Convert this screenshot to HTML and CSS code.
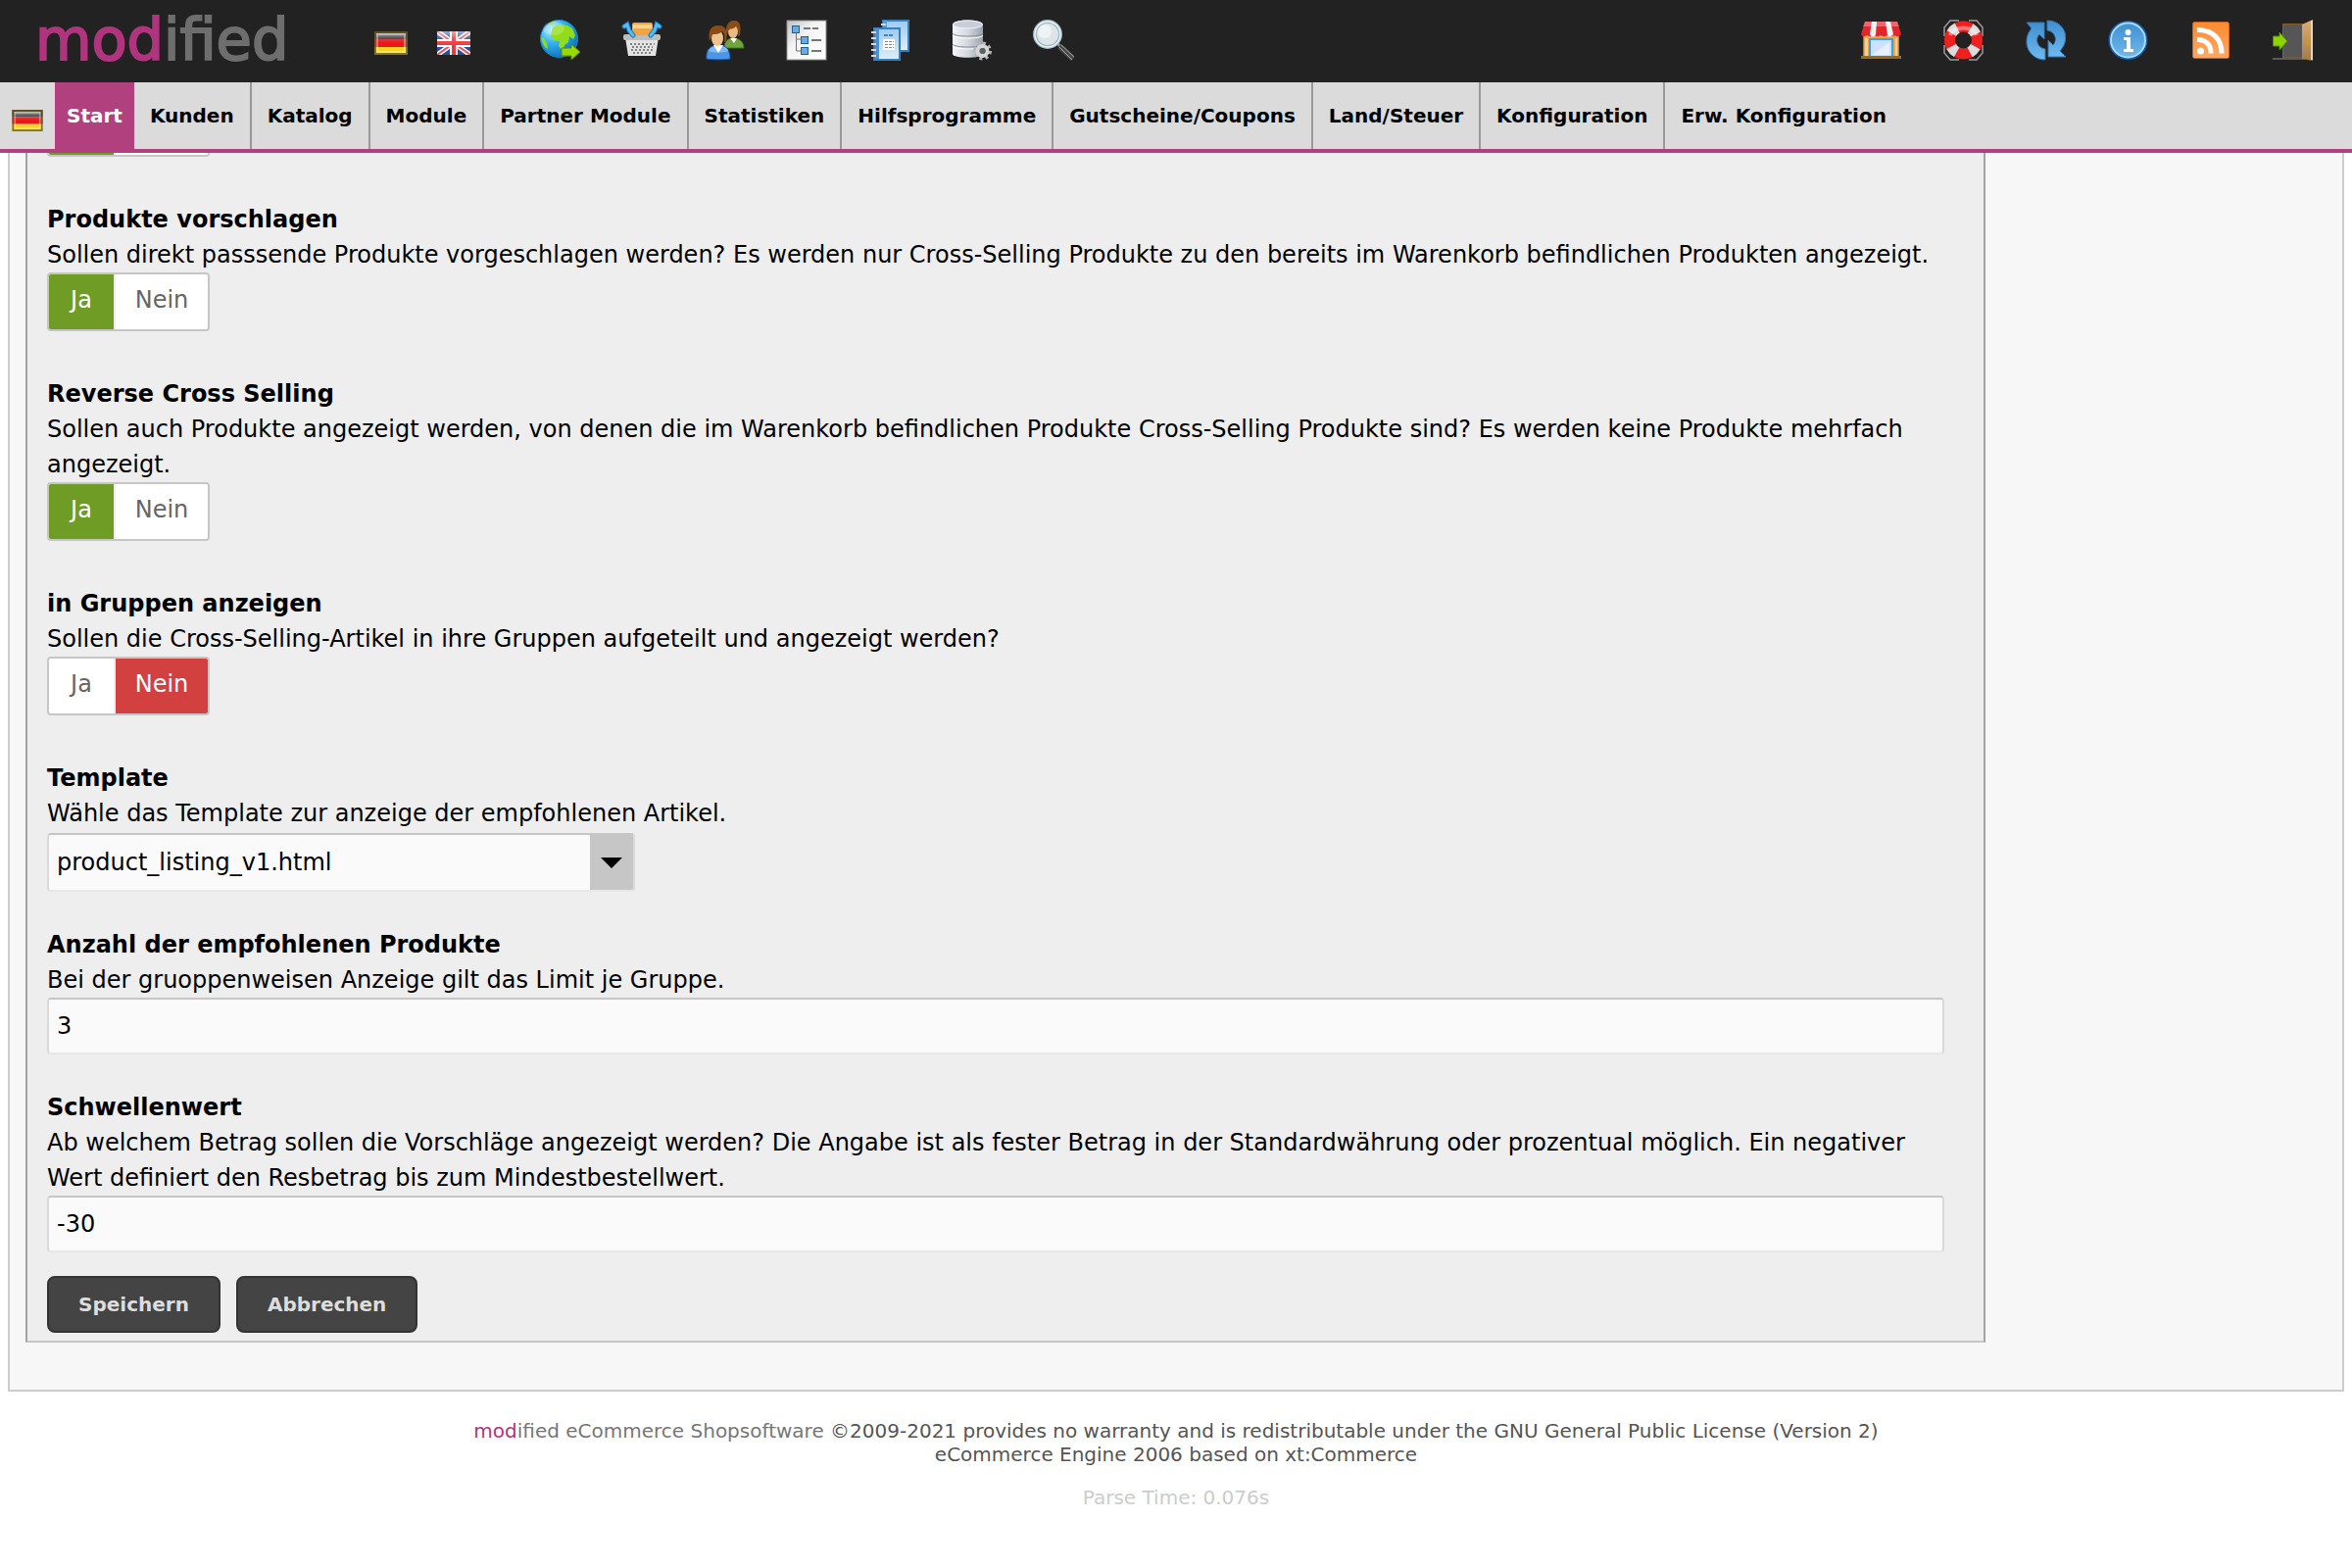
FILE: index.html
```
<!DOCTYPE html>
<html lang="de">
<head>
  <meta charset="UTF-8">
  <meta name="viewport" content="width=device-width, initial-scale=1.0">
  <title>modified eCommerce Shopsoftware</title>
  <link rel="stylesheet" href="styles.css">
</head>
<body>
  <!-- shared gradients and flags -->
  <svg class="defs" aria-hidden="true">
    <defs>
      <linearGradient id="gBlue" x1="0" y1="0" x2="0" y2="1"><stop offset="0" stop-color="#3f8fd0"/><stop offset="1" stop-color="#6fb9ec"/></linearGradient>
      <linearGradient id="gGrey" x1="0" y1="0" x2="1" y2="0"><stop offset="0" stop-color="#f4f6f9"/><stop offset="0.5" stop-color="#d3d8e0"/><stop offset="1" stop-color="#9ca2ab"/></linearGradient>
      <radialGradient id="gGlobe" cx="0.3" cy="0.25" r="0.8"><stop offset="0" stop-color="#b4f0ff"/><stop offset="0.45" stop-color="#37b2ee"/><stop offset="1" stop-color="#0a72bd"/></radialGradient>
      <linearGradient id="gPage" x1="0" y1="0" x2="1" y2="1"><stop offset="0" stop-color="#c0c0c0"/><stop offset="0.4" stop-color="#f4f4f4"/><stop offset="1" stop-color="#ffffff"/></linearGradient>
      <linearGradient id="gBook" x1="0" y1="0" x2="0" y2="1"><stop offset="0" stop-color="#9ccbf2"/><stop offset="1" stop-color="#deeefc"/></linearGradient>
      <linearGradient id="gOrange" x1="0" y1="0" x2="0" y2="1"><stop offset="0" stop-color="#ff8a2e"/><stop offset="1" stop-color="#ffa864"/></linearGradient>
      <linearGradient id="gShine" x1="0" y1="0" x2="0" y2="1"><stop offset="0" stop-color="#fff" stop-opacity="0.55"/><stop offset="0.5" stop-color="#fff" stop-opacity="0.15"/><stop offset="1" stop-color="#fff" stop-opacity="0"/></linearGradient>
      <linearGradient id="gDoor" x1="0" y1="0" x2="0" y2="1"><stop offset="0" stop-color="#dcae72"/><stop offset="1" stop-color="#a57a45"/></linearGradient>
      <symbol id="flag-de" viewBox="0 0 34 24">
        <path fill="#333" d="M0 0h34v8H0z"/>
        <path fill="#e8191d" d="M0 8h34v8H0z"/>
        <path fill="#f7d51c" d="M0 16h34v8H0z"/>
        <rect x="3" y="3" width="28" height="18" fill="none" stroke="#fff" stroke-opacity="0.35" stroke-width="2"/>
        <path fill="url(#gShine)" d="M2 2h30v10H2z"/>
        <rect x="1" y="1" width="32" height="22" fill="none" stroke="#6b5a1c" stroke-opacity="0.8" stroke-width="2"/>
      </symbol>
      <symbol id="flag-gb" viewBox="0 0 34 24">
        <path fill="#2a4fa2" d="M0 0h34v24H0z"/>
        <path stroke="#fff" stroke-width="5" d="M0 0l34 24M34 0L0 24"/>
        <path stroke="#e25360" stroke-width="2" d="M0 0l34 24M34 0L0 24"/>
        <path stroke="#fff" stroke-width="8" d="M17 0v24M0 12h34"/>
        <path stroke="#ee3a3f" stroke-width="4" d="M17 0v24M0 12h34"/>
        <path fill="url(#gShine)" d="M0 0h34v14H0z"/>
      </symbol>
    </defs>
  </svg>

  <header class="top">
    <div class="toolbar">
      <a href="#" class="logo"><span>mod</span>ified</a>
      <div class="flags">
        <a href="#" aria-label="Deutsch"><svg width="34" height="24"><use href="#flag-de"/></svg></a>
        <a href="#" aria-label="English"><svg width="34" height="24"><use href="#flag-gb"/></svg></a>
      </div>
      <div class="icons">
        <a href="#" aria-label="Land">
          <svg class="icon" viewBox="0 0 42 42">
            <circle cx="20.500" cy="19.500" r="19" fill="url(#gGlobe)" stroke="#1687cf"/>
            <path fill="#93dc1a" d="M14 8l6-3 9 1 5 3 3 7-2 4-4-3-1 6-4 3-2 6-4-5 1-5-6-1-3-5 1-4zM2 18l3 1 3 5 1 6-3-2-3-6zM13 2l4-1-2 3-5 2z"/>
            <ellipse cx="15" cy="9" rx="11" ry="7" fill="#fff" opacity="0.2"/>
            <path fill="#9bd800" stroke="#4f8a00" d="M23 29h10v-4l9 8-9 8v-4H23z"/>
          </svg>
        </a>
        <a href="#" aria-label="Bestellungen">
          <svg class="icon" viewBox="0 0 42 42">
            <path fill="#e3e3e3" d="M4 18h34l-3 19H7z"/>
            <rect x="2" y="15" width="38" height="6" rx="2" fill="#bdbdbd"/>
            <path stroke="#858585" stroke-width="2" stroke-dasharray="2 2" d="M9 25h25M10 31h23"/>
            <path stroke="#858585" stroke-width="2" stroke-dasharray="2 2" d="M11 28h21M12 34h19"/>
            <rect x="11" y="3" width="21" height="13" rx="2" fill="#f2a440"/>
            <path fill="#ffd28e" d="M12 5h19v4H12z"/>
            <path fill="none" stroke="#1777b8" stroke-width="5" stroke-linecap="round" d="M3 7l3-2 2 6 4 5M39 7l-3-2-2 6-4 5"/>
            <path fill="none" stroke="#58baf2" stroke-width="3" stroke-linecap="round" d="M3 7l3-2 2 6 4 5M39 7l-3-2-2 6-4 5"/>
          </svg>
        </a>
        <a href="#" aria-label="Kunden">
          <svg class="icon" viewBox="0 0 42 42">
            <path fill="#71a53b" stroke="#40701c" d="M21 29c0-6 3-10 9-10s11 3 11 10z"/>
            <path fill="#fff" d="M27 19h7l-3 5z"/>
            <ellipse cx="30" cy="12" rx="5" ry="7" fill="#e7bb82"/>
            <path fill="#8b4c17" d="M23 17c-1-9 1-16 8-16s7 6 6 15l-2 1c1-5 0-8-2-10-3 3-5 2-7 3z"/>
            <path fill="#4b96e6" stroke="#1f5cb0" d="M3 40c-1-9 4-14 12-14s12 5 12 14c-5 1-19 1-24 0z"/>
            <path fill="#a4cff8" d="M5 32c1-3 4-5 8-5h6c4 1 6 3 6 5-5 2-15 2-20 0z" opacity="0.6"/>
            <path fill="#fff" d="M10 26h10l-5 8z"/>
            <ellipse cx="14" cy="19" rx="6" ry="8" fill="#edc48d"/>
            <path fill="#8b4c17" d="M6 22C4 12 7 6 15 6s10 6 8 16l-2 1c1-6 0-9-2-11-3 3-7 3-10 3z"/>
          </svg>
        </a>
        <a href="#" aria-label="Kategorien">
          <svg class="icon" viewBox="0 0 42 42">
            <rect x="1" y="1" width="40" height="40" fill="url(#gPage)" stroke="#8c8c8c"/>
            <path fill="none" stroke="#747474" d="M10.500 12v20H16M10.500 20H16"/>
            <g fill="#6cabe0" stroke="#1f5f99"><rect x="6.500" y="6.500" width="7" height="7"/><rect x="15.500" y="17.500" width="7" height="7"/><rect x="15.500" y="28.500" width="7" height="7"/></g>
            <path stroke="#777" stroke-width="2" d="M18 9h7M27 9h6M26 21h10M26 32h10"/>
          </svg>
        </a>
        <a href="#" aria-label="Content">
          <svg class="icon" viewBox="0 0 42 42">
            <rect x="15" y="1" width="26" height="31" fill="url(#gBook)" stroke="#3a7fbd" stroke-width="2"/>
            <path stroke="#5b9bd4" stroke-width="4" d="M17 1v10"/>
            <rect x="6" y="9" width="26" height="32" fill="url(#gBook)" stroke="#3a7fbd" stroke-width="2"/>
            <path stroke="#4e90cc" stroke-width="4" d="M9 9v31"/>
            <path stroke="#d8d8d8" stroke-width="2" d="M3 13h5M3 19h5M3 25h5M3 31h5M3 37h5M13 5h5"/>
            <rect x="15" y="20" width="12" height="11" fill="#fff"/>
            <path stroke="#4d80ad" stroke-width="2" stroke-dasharray="4 1" d="M16 16h10"/>
            <path stroke="#888" stroke-dasharray="3 1" d="M17 22.500h9M17 25.500h9M17 28.500h9"/>
          </svg>
        </a>
        <a href="#" aria-label="Datenbank">
          <svg class="icon" viewBox="0 0 42 42">
            <path fill="url(#gGrey)" d="M2 5c0-6 31-6 31 0v30c0 5-31 5-31 0z"/>
            <path fill="none" stroke="#868d98" d="M2 14c1 4 30 4 31 0M2 25c1 4 30 4 31 0"/>
            <path fill="none" stroke="#fff" d="M2 16c1 4 30 4 31 0M2 27c1 4 30 4 31 0"/>
            <ellipse cx="17.500" cy="5" rx="15" ry="4" fill="#c7ced9" stroke="#f2f4f7"/>
            <circle cx="32.500" cy="32" r="7.500" fill="none" stroke="#b5b5b5" stroke-width="4" stroke-dasharray="2.945 2.945"/>
            <circle cx="32.500" cy="32" r="5" fill="none" stroke="#d6d6d6" stroke-width="4"/>
            <circle cx="32.500" cy="32" r="3" fill="#5c6168"/>
          </svg>
        </a>
        <a href="#" aria-label="Suche">
          <svg class="icon" viewBox="0 0 42 42">
            <path stroke="#8e8e8e" stroke-width="3" d="M23 23l6 5"/>
            <path stroke="#4a4a4a" stroke-width="6" d="M27 27l14 13"/>
            <path stroke="#a5a5a5" stroke-width="1" d="M27 28l13 13M29 26l13 12"/>
            <circle cx="15" cy="15" r="13" fill="#dce6e9" stroke="#9fb6c0" stroke-width="4"/>
            <circle cx="15" cy="15" r="13" fill="none" stroke="#eef4f6" stroke-width="1.500"/>
            <circle cx="12" cy="12" r="7" fill="#fff" opacity="0.5"/>
          </svg>
        </a>
      </div>
      <div class="icons icons-right">
        <a href="#" aria-label="Shop">
          <svg class="icon" viewBox="0 0 42 42">
            <path fill="#e2aa58" stroke="#b67a1e" d="M3.500 16h36v22h-36z"/>
            <path fill="#f6d092" d="M5 19h3v18H5zM36 19h2v18h-2z"/>
            <rect x="10" y="20" width="23" height="18" fill="#cfe0ff" stroke="#3d9fe0" stroke-width="2"/>
            <path fill="#fff" opacity="0.5" d="M12 36l18-13v13z"/>
            <path fill="#a06a10" d="M1 37h41v3H1z"/>
            <path fill="#e5242b" d="M5 2h33l4 13c-2 3-5 3-7 0-2 3-5 3-7 0-2 3-5 3-7 0-2 3-5 3-7 0-2 3-5 3-7 0-2 3-4 3-6 0z"/>
            <path fill="#f1f1f1" d="M12 2h5l-1 14c-2 2-5 2-6-1zM26 2h5l3 13c-2 3-5 3-6 1z"/>
            <path fill="#fff" opacity="0.3" d="M5 2h33l2 5H3z"/>
          </svg>
        </a>
        <a href="#" aria-label="Support">
          <svg class="icon" viewBox="0 0 42 42">
            <path fill="none" stroke="#9a9a9a" stroke-width="1.500" d="M17 1H8L2 8v9M27 1h8l6 7v9M17 41H8l-6-7v-8M27 41h8l6-7v-8"/>
            <circle cx="21.500" cy="21" r="14" fill="none" stroke="#ee2020" stroke-width="11"/>
            <circle cx="21.500" cy="21" r="14" fill="none" stroke="#dcdcdc" stroke-width="11" stroke-dasharray="8 14" stroke-dashoffset="-7"/>
            <path fill="none" stroke="#fff" stroke-width="4" opacity="0.4" d="M8 16c3-10 24-10 27 0"/>
          </svg>
        </a>
        <a href="#" aria-label="Aktualisieren">
          <svg class="icon" viewBox="0 0 42 42">
            <path fill="url(#gBlue)" stroke="#2f78b5" d="M2 3h18v17l-5-5c-5 5-2 14 6 15v11C4 41-4 22 7 9z"/>
            <path fill="url(#gBlue)" stroke="#2f78b5" d="M42 38H24V21l5 5c5-5 2-14-6-15V1c17 0 25 18 13 31z"/>
          </svg>
        </a>
        <a href="#" aria-label="Info">
          <svg class="icon" viewBox="0 0 42 42">
            <circle cx="21.500" cy="21" r="20" fill="#1759a8"/>
            <circle cx="21.500" cy="21" r="17.500" fill="url(#gBlue)" stroke="#a5dcff" stroke-width="2"/>
            <circle cx="21.500" cy="13" r="3" fill="#fff"/>
            <path fill="#fff" d="M17 18h7v12h3v3H17v-3h3v-9h-3z"/>
          </svg>
        </a>
        <a href="#" aria-label="RSS">
          <svg class="icon" viewBox="0 0 42 42">
            <rect x="3.500" y="2.500" width="37" height="37" rx="2" fill="url(#gOrange)" stroke="#c9601c"/>
            <circle cx="11.500" cy="32" r="3.500" fill="#fff"/>
            <path fill="none" stroke="#fff" stroke-width="5" d="M8 20.500c9 0 14 5 14 14M8 10.500c16 0 25 9 25 24"/>
          </svg>
        </a>
        <a href="#" aria-label="Abmelden">
          <svg class="icon" viewBox="0 0 42 42">
            <path fill="#565658" stroke="#84602e" d="M11.500 39V4.500H32V39z"/>
            <path stroke="#5a5a5a" stroke-width="2" d="M1 40h33"/>
            <path fill="url(#gDoor)" d="M31 5l11-5v42l-11-2z"/>
            <path stroke="#f3d3a0" stroke-width="2" d="M41 1v40"/>
            <path fill="none" stroke="#d79a18" stroke-width="1.500" d="M39 19h-2v6h2"/>
            <path fill="#8fd400" stroke="#4c8a00" d="M1.500 17H8v-4l8 9-8 9v-4H1.500z"/>
          </svg>
        </a>
      </div>
    </div>
    <nav class="menu">
      <a href="#" class="menu-flag" aria-label="Deutsch"><svg width="32" height="22"><use href="#flag-de"/></svg></a>
      <a href="#" class="active">Start</a>
      <a href="#">Kunden</a>
      <a href="#">Katalog</a>
      <a href="#">Module</a>
      <a href="#">Partner Module</a>
      <a href="#">Statistiken</a>
      <a href="#">Hilfsprogramme</a>
      <a href="#">Gutscheine/Coupons</a>
      <a href="#">Land/Steuer</a>
      <a href="#">Konfiguration</a>
      <a href="#">Erw. Konfiguration</a>
    </nav>
  </header>

  <main class="content">
    <form class="panel">
      <div class="field field-toggle">
        <div class="toggle" role="radiogroup" aria-label="Status">
          <label class="yes"><input type="radio" name="status" aria-label="Ja" checked></label>
          <label class="no"><input type="radio" name="status" aria-label="Nein"></label>
        </div>
      </div>
      <div class="field field-toggle">
        <h2 id="l-suggest">Produkte vorschlagen</h2>
        <p>Sollen direkt passsende Produkte vorgeschlagen werden? Es werden nur Cross-Selling Produkte zu den bereits im Warenkorb befindlichen Produkten angezeigt.</p>
        <div class="toggle" role="radiogroup" aria-labelledby="l-suggest">
          <label class="yes"><input type="radio" name="suggest" checked>Ja</label>
          <label class="no"><input type="radio" name="suggest">Nein</label>
        </div>
      </div>
      <div class="field field-toggle">
        <h2 id="l-reverse">Reverse Cross Selling</h2>
        <p>Sollen auch Produkte angezeigt werden, von denen die im Warenkorb befindlichen Produkte Cross-Selling Produkte sind? Es werden keine Produkte mehrfach angezeigt.</p>
        <div class="toggle" role="radiogroup" aria-labelledby="l-reverse">
          <label class="yes"><input type="radio" name="reverse" checked>Ja</label>
          <label class="no"><input type="radio" name="reverse">Nein</label>
        </div>
      </div>
      <div class="field field-toggle">
        <h2 id="l-groups">in Gruppen anzeigen</h2>
        <p>Sollen die Cross-Selling-Artikel in ihre Gruppen aufgeteilt und angezeigt werden?</p>
        <div class="toggle" role="radiogroup" aria-labelledby="l-groups">
          <label class="yes"><input type="radio" name="groups">Ja</label>
          <label class="no"><input type="radio" name="groups" checked>Nein</label>
        </div>
      </div>
      <div class="field">
        <h2><label for="template">Template</label></h2>
        <p>Wähle das Template zur anzeige der empfohlenen Artikel.</p>
        <div class="select">
          <select id="template">
            <option>product_listing_v1.html</option>
          </select>
        </div>
      </div>
      <div class="field">
        <h2><label for="limit">Anzahl der empfohlenen Produkte</label></h2>
        <p>Bei der gruoppenweisen Anzeige gilt das Limit je Gruppe.</p>
        <input type="text" class="text" id="limit" value="3">
      </div>
      <div class="field">
        <h2><label for="threshold">Schwellenwert</label></h2>
        <p>Ab welchem Betrag sollen die Vorschläge angezeigt werden? Die Angabe ist als fester Betrag in der Standardwährung oder prozentual möglich. Ein negativer Wert definiert den Resbetrag bis zum Mindestbestellwert.</p>
        <input type="text" class="text" id="threshold" value="-30">
      </div>
      <div class="buttons">
        <button type="submit">Speichern</button>
        <button type="button">Abbrechen</button>
      </div>
    </form>
  </main>

  <footer class="footer">
    <p><a href="#"><span>mod</span>ified eCommerce Shopsoftware</a> ©2009-2021 provides no warranty and is redistributable under the GNU General Public License (Version 2)</p>
    <p>eCommerce Engine 2006 based on xt:Commerce</p>
    <p class="parse">Parse Time: 0.076s</p>
  </footer>
</body>
</html>
```
FILE: styles.css
```
* {
  box-sizing: border-box;
}
body {
  margin: 0;
  background: #fff;
  color: #000;
  font-family: Verdana, "DejaVu Sans", sans-serif;
  font-size: 24px;
  line-height: 36px;
}
h2, p {
  margin: 0;
  font-size: inherit;
}
a {
  color: inherit;
  text-decoration: none;
}
svg {
  display: block;
}
.defs {
  position: absolute;
  width: 0;
  height: 0;
}

/* header */
.top {
  position: fixed;
  top: 0;
  left: 0;
  right: 0;
  z-index: 10;
}
.toolbar {
  display: flex;
  align-items: center;
  height: 84px;
  padding: 0 40px 2px 36px;
  background: #222;
}
.logo {
  width: 346px;
  color: #6e6e6e;
  font-size: 59px;
  line-height: 82px;
  -webkit-text-stroke: 2px;
}
.logo span, .footer span {
  color: #b0347e;
}
.flags {
  display: flex;
  gap: 30px;
  padding-top: 6px;
  margin-right: 70px;
}
.icons {
  display: flex;
  gap: 42px;
}
.icons-right {
  margin-left: auto;
}
.icon {
  width: 42px;
  height: 42px;
}
.menu {
  display: flex;
  height: 72px;
  background: #dbdbdb;
  border-bottom: 4px solid #b0417e;
  font-size: 20px;
  font-weight: bold;
  line-height: 68px;
}
.menu a {
  padding: 0 16px;
  border-right: 2px solid #999;
}
.menu a:last-child {
  border-right: none;
}
.menu .menu-flag {
  padding: 28px 12px 0;
  border: none;
}
.menu .active {
  padding: 0 12px;
  border: none;
  background: #b0417e;
  color: #fff;
}

/* module settings */
.content {
  margin: 0 8px;
  padding: 0 16px 48px;
  border: 2px solid #ccc;
  background: #f7f7f7;
}
.panel {
  max-width: 2000px;
  padding: 98px 40px 8px 20px;
  border: 2px solid #a3a3a3;
  border-top: none;
  border-bottom-color: #c6c6c6;
  background: #eee;
}
.field {
  margin-bottom: 36px;
}
.field-toggle {
  margin-bottom: 46px;
}
.toggle {
  display: flex;
  gap: 2px;
  width: fit-content;
  height: 60px;
  border: 2px solid #c6c6c6;
  border-radius: 4px;
  background: #eee;
  overflow: hidden;
}
.toggle label {
  position: relative;
  min-width: 66px;
  background: #fff;
  color: #666;
  line-height: 52px;
  text-align: center;
}
.toggle .no {
  min-width: 94px;
}
.toggle input {
  position: absolute;
  inset: 0;
  margin: 0;
  opacity: 0;
  cursor: pointer;
}
.toggle .yes:has(:checked) {
  background: #6f9c24;
  color: #fff;
}
.toggle .no:has(:checked) {
  background: #d34040;
  color: #fff;
}
.text, .select select {
  display: block;
  width: 100%;
  height: 58px;
  padding: 0 8px;
  border: 2px solid #dadada;
  border-top-color: #c6c6c6;
  border-bottom-color: #e8e8e8;
  border-radius: 4px;
  background: #fafafa;
  color: #000;
  font: inherit;
}
.select {
  position: relative;
  max-width: 600px;
  padding-top: 2px;
}
.select select {
  height: 60px;
  appearance: none;
  background: linear-gradient(#c6c6c6, #c6c6c6) right / 44px 100% no-repeat #fafafa;
}
.select::after {
  content: "";
  position: absolute;
  right: 13px;
  top: 27px;
  border: 11px solid transparent;
  border-top-color: #000;
  border-bottom: none;
  pointer-events: none;
}
.buttons {
  display: flex;
  gap: 16px;
  margin-top: -12px;
}
button {
  height: 58px;
  padding: 0 30px;
  border: 2px solid #333;
  border-radius: 8px;
  background: #444;
  color: #ddd;
  font-family: inherit;
  font-size: 20px;
  font-weight: bold;
  cursor: pointer;
}
button:hover {
  background: #b0417e;
}

/* footer */
.footer {
  padding: 28px 0;
  color: #555;
  font-size: 20px;
  line-height: 24px;
  text-align: center;
}
.footer a {
  color: #777;
}
.footer .parse {
  margin-top: 20px;
  color: #ccc;
}
```
